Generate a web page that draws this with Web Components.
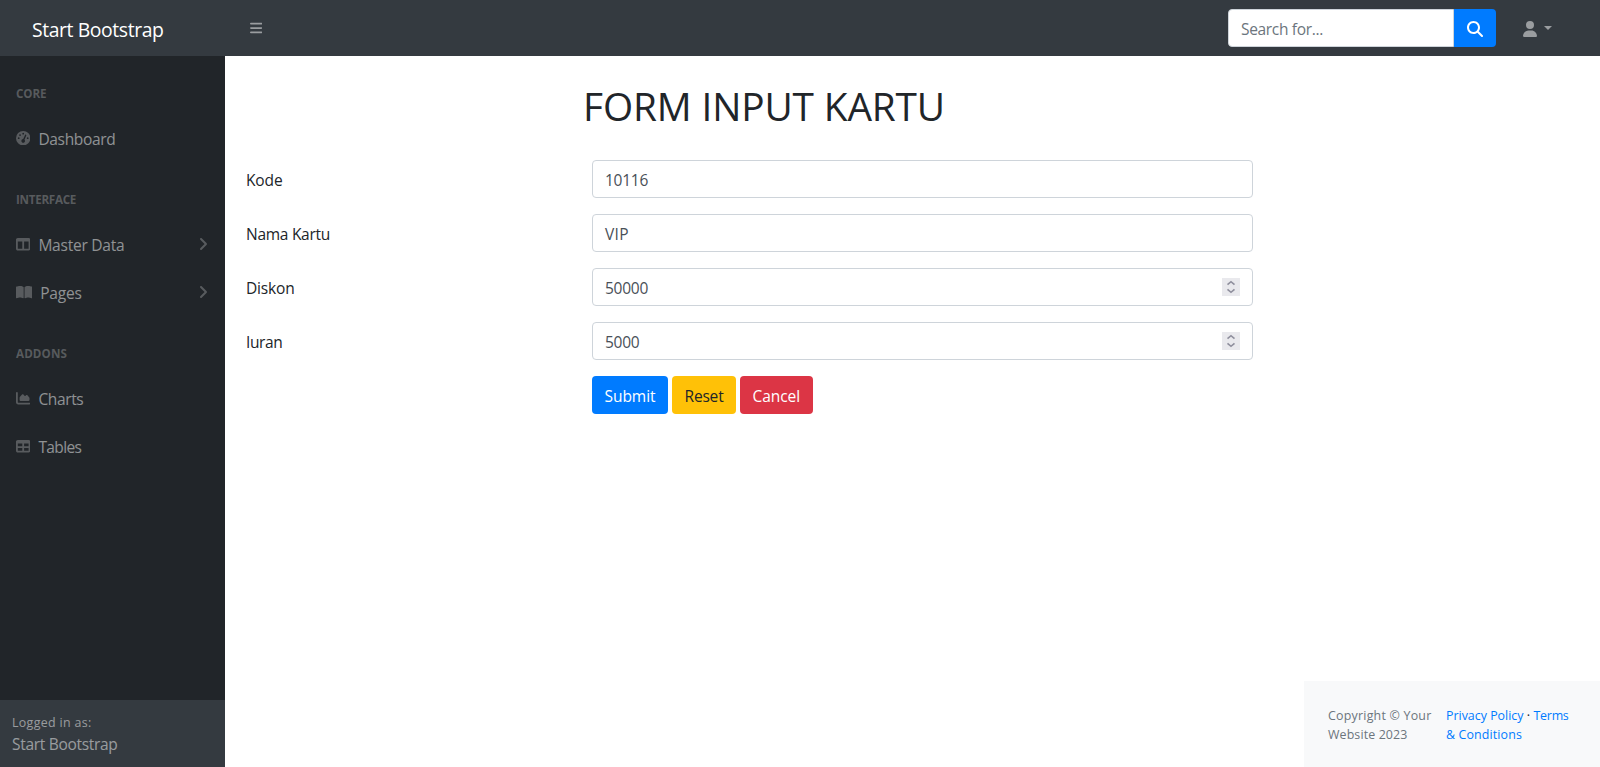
<!DOCTYPE html>
<html lang="id">
<head>
<meta charset="utf-8">
<title>Form Input Kartu</title>
<style>
html,body{margin:0;height:100%;overflow:hidden}
body{font-family:"Open Sans","Noto Sans",sans-serif;font-size:16px;line-height:24px;color:#212529;background:#fff}
</style>
</head>
<body>
<admin-page></admin-page>
<script>
const ICONS={
bars:[448,'M0 96C0 78.3 14.3 64 32 64H416c17.7 0 32 14.3 32 32s-14.3 32-32 32H32C14.3 128 0 113.7 0 96zM0 256c0-17.7 14.3-32 32-32H416c17.7 0 32 14.3 32 32s-14.3 32-32 32H32c-17.7 0-32-14.3-32-32zM448 416c0 17.7-14.3 32-32 32H32c-17.7 0-32-14.3-32-32s14.3-32 32-32H416c17.7 0 32 14.3 32 32z'],
search:[512,'M416 208c0 45.9-14.9 88.3-40 122.7L502.6 457.4c12.5 12.5 12.5 32.8 0 45.3s-32.8 12.5-45.3 0L330.7 376c-34.4 25.2-76.8 40-122.7 40C93.1 416 0 322.9 0 208S93.1 0 208 0S416 93.1 416 208zM208 352a144 144 0 1 0 0-288 144 144 0 1 0 0 288z'],
user:[448,'M224 256A128 128 0 1 0 224 0a128 128 0 1 0 0 256zm-45.7 48C79.8 304 0 383.8 0 482.3C0 498.7 13.3 512 29.7 512H418.3c16.4 0 29.7-13.3 29.7-29.7C448 383.8 368.2 304 269.7 304H178.3z'],
columns:[512,'M0 96C0 60.7 28.7 32 64 32H448c35.3 0 64 28.7 64 64V416c0 35.3-28.7 64-64 64H64c-35.3 0-64-28.7-64-64V96zm64 64V416H224V160H64zm384 0H288V416H448V160z'],
table:[512,'M64 256V160H224v96H64zm0 64H224v96H64V320zm224 96V320H448v96H288zM448 256H288V160H448v96zM64 32C28.7 32 0 60.7 0 96V416c0 35.3 28.7 64 64 64H448c35.3 0 64-28.7 64-64V96c0-35.3-28.7-64-64-64H64z'],
book:[576,'M249.6 471.5c10.8 3.8 22.4-4.1 22.4-15.5V78.6c0-4.2-1.6-8.4-5-11C247.4 52 202.4 32 144 32C93.5 32 46.3 45.3 18.1 56.1C6.8 60.5 0 71.7 0 83.8V454.1c0 11.9 12.8 20.2 24.1 16.5C55.6 460.1 105.5 448 144 448c33.9 0 79 14 105.6 23.5zm76.8 0C353 462 398.1 448 432 448c38.5 0 88.4 12.1 119.9 22.6c11.3 3.8 24.1-4.6 24.1-16.5V83.8c0-12.1-6.8-23.3-18.1-27.6C529.7 45.3 482.5 32 432 32c-58.4 0-103.4 20-123 35.6c-3.3 2.6-5 6.8-5 11V456c0 11.4 11.7 19.3 22.4 15.5z'],
chart:[512,'M64 64c0-17.7-14.3-32-32-32S0 46.3 0 64V400c0 44.2 35.8 80 80 80H480c17.7 0 32-14.3 32-32s-14.3-32-32-32H80c-8.8 0-16-7.2-16-16V64zm96 288H448c17.7 0 32-14.3 32-32V251.8c0-7.6-2.7-15-7.7-20.8l-65.8-76.8c-12.1-14.2-33.7-15-46.9-1.8l-21 21c-10 10-26.4 9.2-35.4-1.6l-39.2-47c-12.6-15.1-35.7-15.4-48.7-.6L135.9 215c-5.1 5.8-7.9 13.3-7.9 21.1v84c0 17.7 14.3 32 32 32z'],
gauge:[512,'M0 256a256 256 0 1 1 512 0A256 256 0 1 1 0 256zM288 96a32 32 0 1 0-64 0 32 32 0 1 0 64 0zM256 416c35.3 0 64-28.7 64-64c0-17.4-6.9-33.1-18.1-44.6L366 161.7c5.3-12.1-.2-26.3-12.3-31.6s-26.3 .2-31.6 12.3L257.9 288c-.6 0-1.3 0-1.9 0c-35.3 0-64 28.7-64 64s28.7 64 64 64zM176 144a32 32 0 1 0-64 0 32 32 0 1 0 64 0zM96 288a32 32 0 1 0 0-64 32 32 0 1 0 0 64zm352-32a32 32 0 1 0-64 0 32 32 0 1 0 64 0z'],
angle:[448,'M201.4 374.6c12.5 12.5 32.8 12.5 45.3 0l160-160c12.5-12.5 12.5-32.8 0-45.3s-32.8-12.5-45.3 0L224 306.7 86.6 169.4c-12.5-12.5-32.8-12.5-45.3 0s-12.5 32.8 0 45.3l160 160z']
};
const define=(name,render,connected)=>customElements.define(name,class extends HTMLElement{
  connectedCallback(){
    if(!this.shadowRoot){this.attachShadow({mode:'open'}).innerHTML=render(this);}
    if(connected)connected(this);
  }
});
const attr=(el,n,d='')=>el.getAttribute(n)??d;

// Solid icon; "size" is the em height in pixels.
define('ui-icon',el=>{
  const [w,d]=ICONS[attr(el,'name')],s=+attr(el,'size','16');
  return `<style>:host{display:inline-block;flex:none;line-height:0}svg{display:block;fill:currentColor}</style>
  <svg width="${w/512*s}" height="${s}" viewBox="0 0 ${w} 512"><path d="${d}"/></svg>`;
});

// Single line of text tracked to the advance width given in "w".
define('fit-text',el=>`<style>:host{display:inline-block;white-space:nowrap;flex:none;width:${attr(el,'w')}px}span{display:inline-block;font-size:.97em}</style><span><slot></slot></span>`,
el=>{
  const span=el.shadowRoot.querySelector('span'),n=el.textContent.length;
  const natural=span.getBoundingClientRect().width;
  span.style.letterSpacing=((+attr(el,'w')-natural)/n).toFixed(3)+'px';
});

define('top-bar',()=>`<style>
:host{display:flex;align-items:center;height:56px;background:#343a40;color:rgba(255,255,255,.5)}
.brand{width:209px;padding:3px 0 0 16px;flex:none;font-size:20px;line-height:30px;color:#fff}
.brand fit-text{margin-left:16px}
.menu{margin-left:25px;flex:1;padding-top:1px}
.search{display:flex;width:268px;height:38px}
.field{flex:1;box-sizing:border-box;border:1px solid #ced4da;border-radius:4px 0 0 4px;background:#fff;color:#6c757d;padding:7px 12px 5px}
.go{width:42px;background:#007bff;border-radius:0 4px 4px 0;color:#fff;display:flex;align-items:center;justify-content:center;padding-top:1px;box-sizing:border-box}
.user{display:flex;align-items:center;margin:2px 48px 0 27px;gap:7px}
.caret{border:4.8px solid transparent;border-top-color:currentColor;border-bottom:0;margin-top:-3px}
</style>
<div class="brand"><fit-text w="131.5">Start Bootstrap</fit-text></div>
<div class="menu"><ui-icon name="bars" size="14"></ui-icon></div>
<div class="search"><div class="field"><fit-text w="82">Search for...</fit-text></div><div class="go"><ui-icon name="search"></ui-icon></div></div>
<div class="user"><ui-icon name="user"></ui-icon><span class="caret"></span></div>`);

define('nav-heading',el=>`<style>:host{display:block;padding:29px 16px 11px;font-size:12px;line-height:18px;font-weight:700;color:rgba(255,255,255,.25)}</style><fit-text w="${attr(el,'w')}">${attr(el,'label')}</fit-text>`);

define('nav-item',el=>`<style>
:host{display:flex;height:48px;box-sizing:border-box;padding:13px 16px 11px;color:rgba(255,255,255,.5)}
.i{color:rgba(255,255,255,.25);margin:4px 8px 0 0}
.a{color:rgba(255,255,255,.25);margin:4px 0 0 auto;transform:rotate(-90deg);height:14px}
</style><ui-icon class="i" name="${attr(el,'icon')}" size="14.4"></ui-icon><fit-text w="${attr(el,'w')}">${attr(el,'label')}</fit-text>${el.hasAttribute('more')?'<ui-icon class="a" name="angle"></ui-icon>':''}`);

define('side-nav',()=>`<style>
:host{display:flex;flex-direction:column;width:225px;flex:none;background:#212529}
nav{flex:1}
footer{background:#343a40;color:rgba(255,255,255,.5);padding:12px;height:43px}
.s{font-size:12.8px;line-height:19px;padding-top:1px}
.s+div{line-height:24px}
</style>
<nav>
<nav-heading label="CORE" w="30.5"></nav-heading>
<nav-item icon="gauge" label="Dashboard" w="77"></nav-item>
<nav-heading label="INTERFACE" w="60"></nav-heading>
<nav-item icon="columns" label="Master Data" w="86" more></nav-item>
<nav-item icon="book" label="Pages" w="41.5" more></nav-item>
<nav-heading label="ADDONS" w="51"></nav-heading>
<nav-item icon="chart" label="Charts" w="45"></nav-item>
<nav-item icon="table" label="Tables" w="43"></nav-item>
</nav>
<footer><div class="s"><fit-text w="79.5">Logged in as:</fit-text></div><div><fit-text w="105.5">Start Bootstrap</fit-text></div></footer>`);

define('form-row',el=>`<style>
:host{display:flex;height:38px;margin-bottom:16px}
.l{width:346px;flex:none;padding-top:8px}
.f{width:661px;box-sizing:border-box;border:1px solid #ced4da;border-radius:4px;color:#495057;background:#fff;padding:7px 12px 5px;display:flex;justify-content:space-between}
svg{display:block;margin-top:2px}
</style><div class="l"><fit-text w="${attr(el,'lw')}">${attr(el,'label')}</fit-text></div>
<div class="f"><fit-text w="${attr(el,'vw')}">${attr(el,'value')}</fit-text>${el.hasAttribute('number')?'<svg width="18" height="18"><path fill="#e9e9ed" d="M0 0h18v18H0z"/><path fill="none" stroke="#8f8f9d" stroke-width="1.6" d="M5.5 6.7 9 3.7l3.500 3M5.500 11.300 9 14.300l3.500-3"/></svg>':''}</div>`);

define('ui-button',el=>`<style>
:host{display:block;box-sizing:border-box;height:38px;border-radius:4px;padding:8px 0 6px 12.5px;width:${attr(el,'width')}px;color:#fff;background:#007bff}
:host([kind=warning]){background:#ffc107;color:#212529}
:host([kind=danger]){background:#dc3545}
</style><fit-text w="${attr(el,'w')}">${attr(el,'label')}</fit-text>`);

define('card-form',()=>`<style>
:host{display:block;padding:24px 0 0 21px;flex:1}
h1{margin:0 0 32px 337px;font-weight:400;font-size:40px;line-height:48px;height:48px}
h1 fit-text{padding-top:2px}
.b{display:flex;gap:4px;margin-left:346px}
</style>
<h1><fit-text w="362">FORM INPUT KARTU</fit-text></h1>
<form-row label="Kode" lw="36.500" value="10116" vw="43"></form-row>
<form-row label="Nama Kartu" lw="84" value="VIP" vw="24"></form-row>
<form-row label="Diskon" lw="48.500" value="50000" vw="43" number></form-row>
<form-row label="Iuran" lw="36.500" value="5000" vw="34.500" number></form-row>
<div class="b"><ui-button label="Submit" w="51" width="76"></ui-button><ui-button kind="warning" label="Reset" w="39" width="64"></ui-button><ui-button kind="danger" label="Cancel" w="47.500" width="73"></ui-button></div>`);

define('page-footer',()=>`<style>
:host{display:flex;align-self:flex-end;box-sizing:border-box;width:296px;height:86px;background:#f8f9fa;padding:25px 0 0 24px;font-size:12.8px;line-height:19px}
.c{width:118px;color:#6c757d}
.k{color:#007bff}.k i{font-style:normal;color:#212529}
</style>
<div class="c"><fit-text w="103.500">Copyright © Your</fit-text><br><fit-text w="79.500">Website 2023</fit-text></div>
<div class="k"><fit-text w="77.500">Privacy Policy</fit-text> <i>·</i> <fit-text w="35">Terms</fit-text><br><fit-text w="76">&amp; Conditions</fit-text></div>`);

define('admin-page',()=>`<style>
:host{display:flex;flex-direction:column;height:767px}
.body{display:flex;flex:1;min-height:0}
main{flex:1;display:flex;flex-direction:column}
</style><top-bar></top-bar><div class="body"><side-nav></side-nav><main><card-form></card-form><page-footer></page-footer></main></div>`);
</script>
</body>
</html>
